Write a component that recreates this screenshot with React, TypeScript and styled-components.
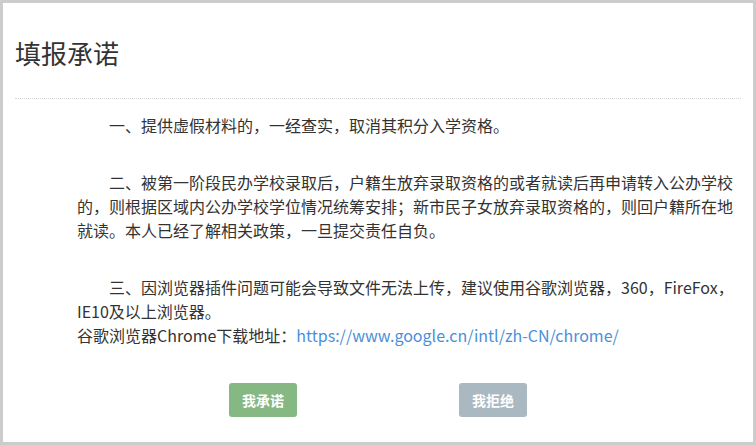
import React from 'react';
import styled, { createGlobalStyle } from 'styled-components';

const GlobalStyle = createGlobalStyle`
  html, body {
    margin: 0;
    padding: 0;
    background: #fff;
  }
  body {
    font-family: "Noto Sans CJK SC", "Noto Sans", sans-serif;
    color: #333;
  }
`;

const Dialog = styled.div`
  width: 756px;
  height: 445px;
  box-sizing: border-box;
  border: 3px solid #cccccc;
  background: #fff;
  display: flex;
  flex-direction: column;
`;

const Header = styled.div`
  margin: 0 12px;
  padding: 32px 0 27px;
  border-bottom: 1px dotted #d6d6d6;
`;

const Title = styled.h3`
  margin: 0;
  font-size: 26px;
  line-height: 36px;
  font-weight: 400;
  color: #333;
`;

const Body = styled.div`
  padding: 14px 12px 0 74px;
`;

const Paragraph = styled.p`
  margin: 0 0 33px;
  font-size: 16px;
  line-height: 24px;
  text-indent: 32px;
  color: #333;

  &:last-child {
    margin-bottom: 0;
  }
`;

const Line = styled.span`
  display: block;
  text-indent: 0;
`;

const Link = styled.a`
  color: #4a90d9;
  text-decoration: none;
`;

const Actions = styled.div`
  display: flex;
  justify-content: center;
  gap: 162px;
  margin-top: 36px;
`;

const Button = styled.button<{ tone: 'agree' | 'refuse' }>`
  width: 68px;
  height: 34px;
  border: none;
  border-radius: 3px;
  background: ${props => (props.tone === 'agree' ? '#86b883' : '#aab8c2')};
  color: #fff;
  font-family: "Noto Sans CJK SC", sans-serif;
  font-size: 14px;
  font-weight: 700;
  padding: 0;
  cursor: pointer;
`;

const App: React.FC = () => {
  return (
    <>
      <GlobalStyle />
      <Dialog>
        <Header>
          <Title>填报承诺</Title>
        </Header>
        <Body>
          <Paragraph>一、提供虚假材料的，一经查实，取消其积分入学资格。</Paragraph>
          <Paragraph>
            二、被第一阶段民办学校录取后，户籍生放弃录取资格的或者就读后再申请转入公办学校的，则根据区域内公办学校学位情况统筹安排；新市民子女放弃录取资格的，则回户籍所在地就读。本人已经了解相关政策，一旦提交责任自负。
          </Paragraph>
          <Paragraph>
            三、因浏览器插件问题可能会导致文件无法上传，建议使用谷歌浏览器，360，FireFox，IE10及以上浏览器。
            <Line>
              谷歌浏览器Chrome下载地址：
              <Link href="#">https://www.google.cn/intl/zh-CN/chrome/</Link>
            </Line>
          </Paragraph>
        </Body>
        <Actions>
          <Button tone="agree">我承诺</Button>
          <Button tone="refuse">我拒绝</Button>
        </Actions>
      </Dialog>
    </>
  );
};

export default App;
